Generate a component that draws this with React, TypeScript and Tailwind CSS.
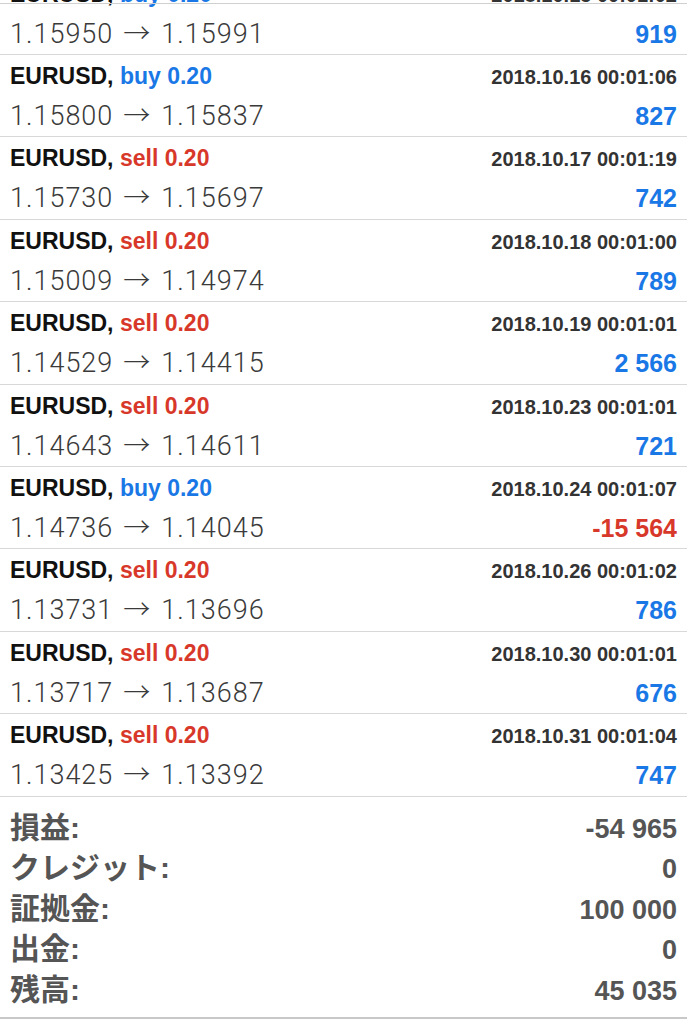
import React from "react";

type Deal = {
  side: "buy" | "sell";
  time: string;
  open: string;
  close: string;
  profit: string;
};

const deals: Deal[] = [
  { side: "buy", time: "2018.10.15 00:01:02", open: "1.15950", close: "1.15991", profit: "919" },
  { side: "buy", time: "2018.10.16 00:01:06", open: "1.15800", close: "1.15837", profit: "827" },
  { side: "sell", time: "2018.10.17 00:01:19", open: "1.15730", close: "1.15697", profit: "742" },
  { side: "sell", time: "2018.10.18 00:01:00", open: "1.15009", close: "1.14974", profit: "789" },
  { side: "sell", time: "2018.10.19 00:01:01", open: "1.14529", close: "1.14415", profit: "2 566" },
  { side: "sell", time: "2018.10.23 00:01:01", open: "1.14643", close: "1.14611", profit: "721" },
  { side: "buy", time: "2018.10.24 00:01:07", open: "1.14736", close: "1.14045", profit: "-15 564" },
  { side: "sell", time: "2018.10.26 00:01:02", open: "1.13731", close: "1.13696", profit: "786" },
  { side: "sell", time: "2018.10.30 00:01:01", open: "1.13717", close: "1.13687", profit: "676" },
  { side: "sell", time: "2018.10.31 00:01:04", open: "1.13425", close: "1.13392", profit: "747" },
];

const totals = [
  { label: "損益:", value: "-54 965" },
  { label: "クレジット:", value: "0" },
  { label: "証拠金:", value: "100 000" },
  { label: "出金:", value: "0" },
  { label: "残高:", value: "45 035" },
];

function DealRow({ deal }: { deal: Deal }) {
  const loss = deal.profit.startsWith("-");
  return (
    <div className="h-[82.4px] box-border border-b border-[#d8d8d8] px-[10px]">
      {/* symbol / side / time */}
      <div className="flex h-[43px] items-baseline justify-between leading-[43px]">
        <span className="text-[23px] font-bold text-[#111]">
          EURUSD,{" "}
          <span className={deal.side === "buy" ? "text-[#1a78e6]" : "text-[#d8382a]"}>
            {deal.side} 0.20
          </span>
        </span>
        <span className="text-[20px] font-bold text-[#333]">{deal.time}</span>
      </div>
      {/* prices / profit */}
      <div className="flex h-[32px] items-baseline justify-between leading-[32px]">
        <span className="font-['Roboto',sans-serif] text-[27px] font-light tracking-[1px] text-[#3a3a3a]">
          {deal.open}
          <span className="mx-[10px] font-['Noto_Sans_CJK_JP',sans-serif] font-light">→</span>
          {deal.close}
        </span>
        <span className={`text-[25px] font-bold ${loss ? "text-[#d8382a]" : "text-[#1a78e6]"}`}>
          {deal.profit}
        </span>
      </div>
    </div>
  );
}

export default function App() {
  return (
    <div className="relative h-[1024px] overflow-hidden bg-white font-['Liberation_Sans','Noto_Sans_CJK_JP',sans-serif]">
      <div className="mt-[-27.4px]">
        {deals.map((d, i) => (
          <DealRow key={i} deal={d} />
        ))}

        {/* Totals */}
        <div className="border-b-2 border-[#c8c8c8] px-[10px] pt-[11px] pb-[6.5px]">
          {totals.map((t) => (
            <div key={t.label} className="flex h-[40.5px] items-baseline justify-between leading-[40.5px] text-[#555]">
              <span className="text-[30px] font-bold">{t.label}</span>
              <span className="text-[27px] font-bold">{t.value}</span>
            </div>
          ))}
        </div>
      </div>

      {/* header edge */}
      <div className="absolute left-0 right-0 top-[3px] h-px bg-[#d0d0d0]" />
    </div>
  );
}
